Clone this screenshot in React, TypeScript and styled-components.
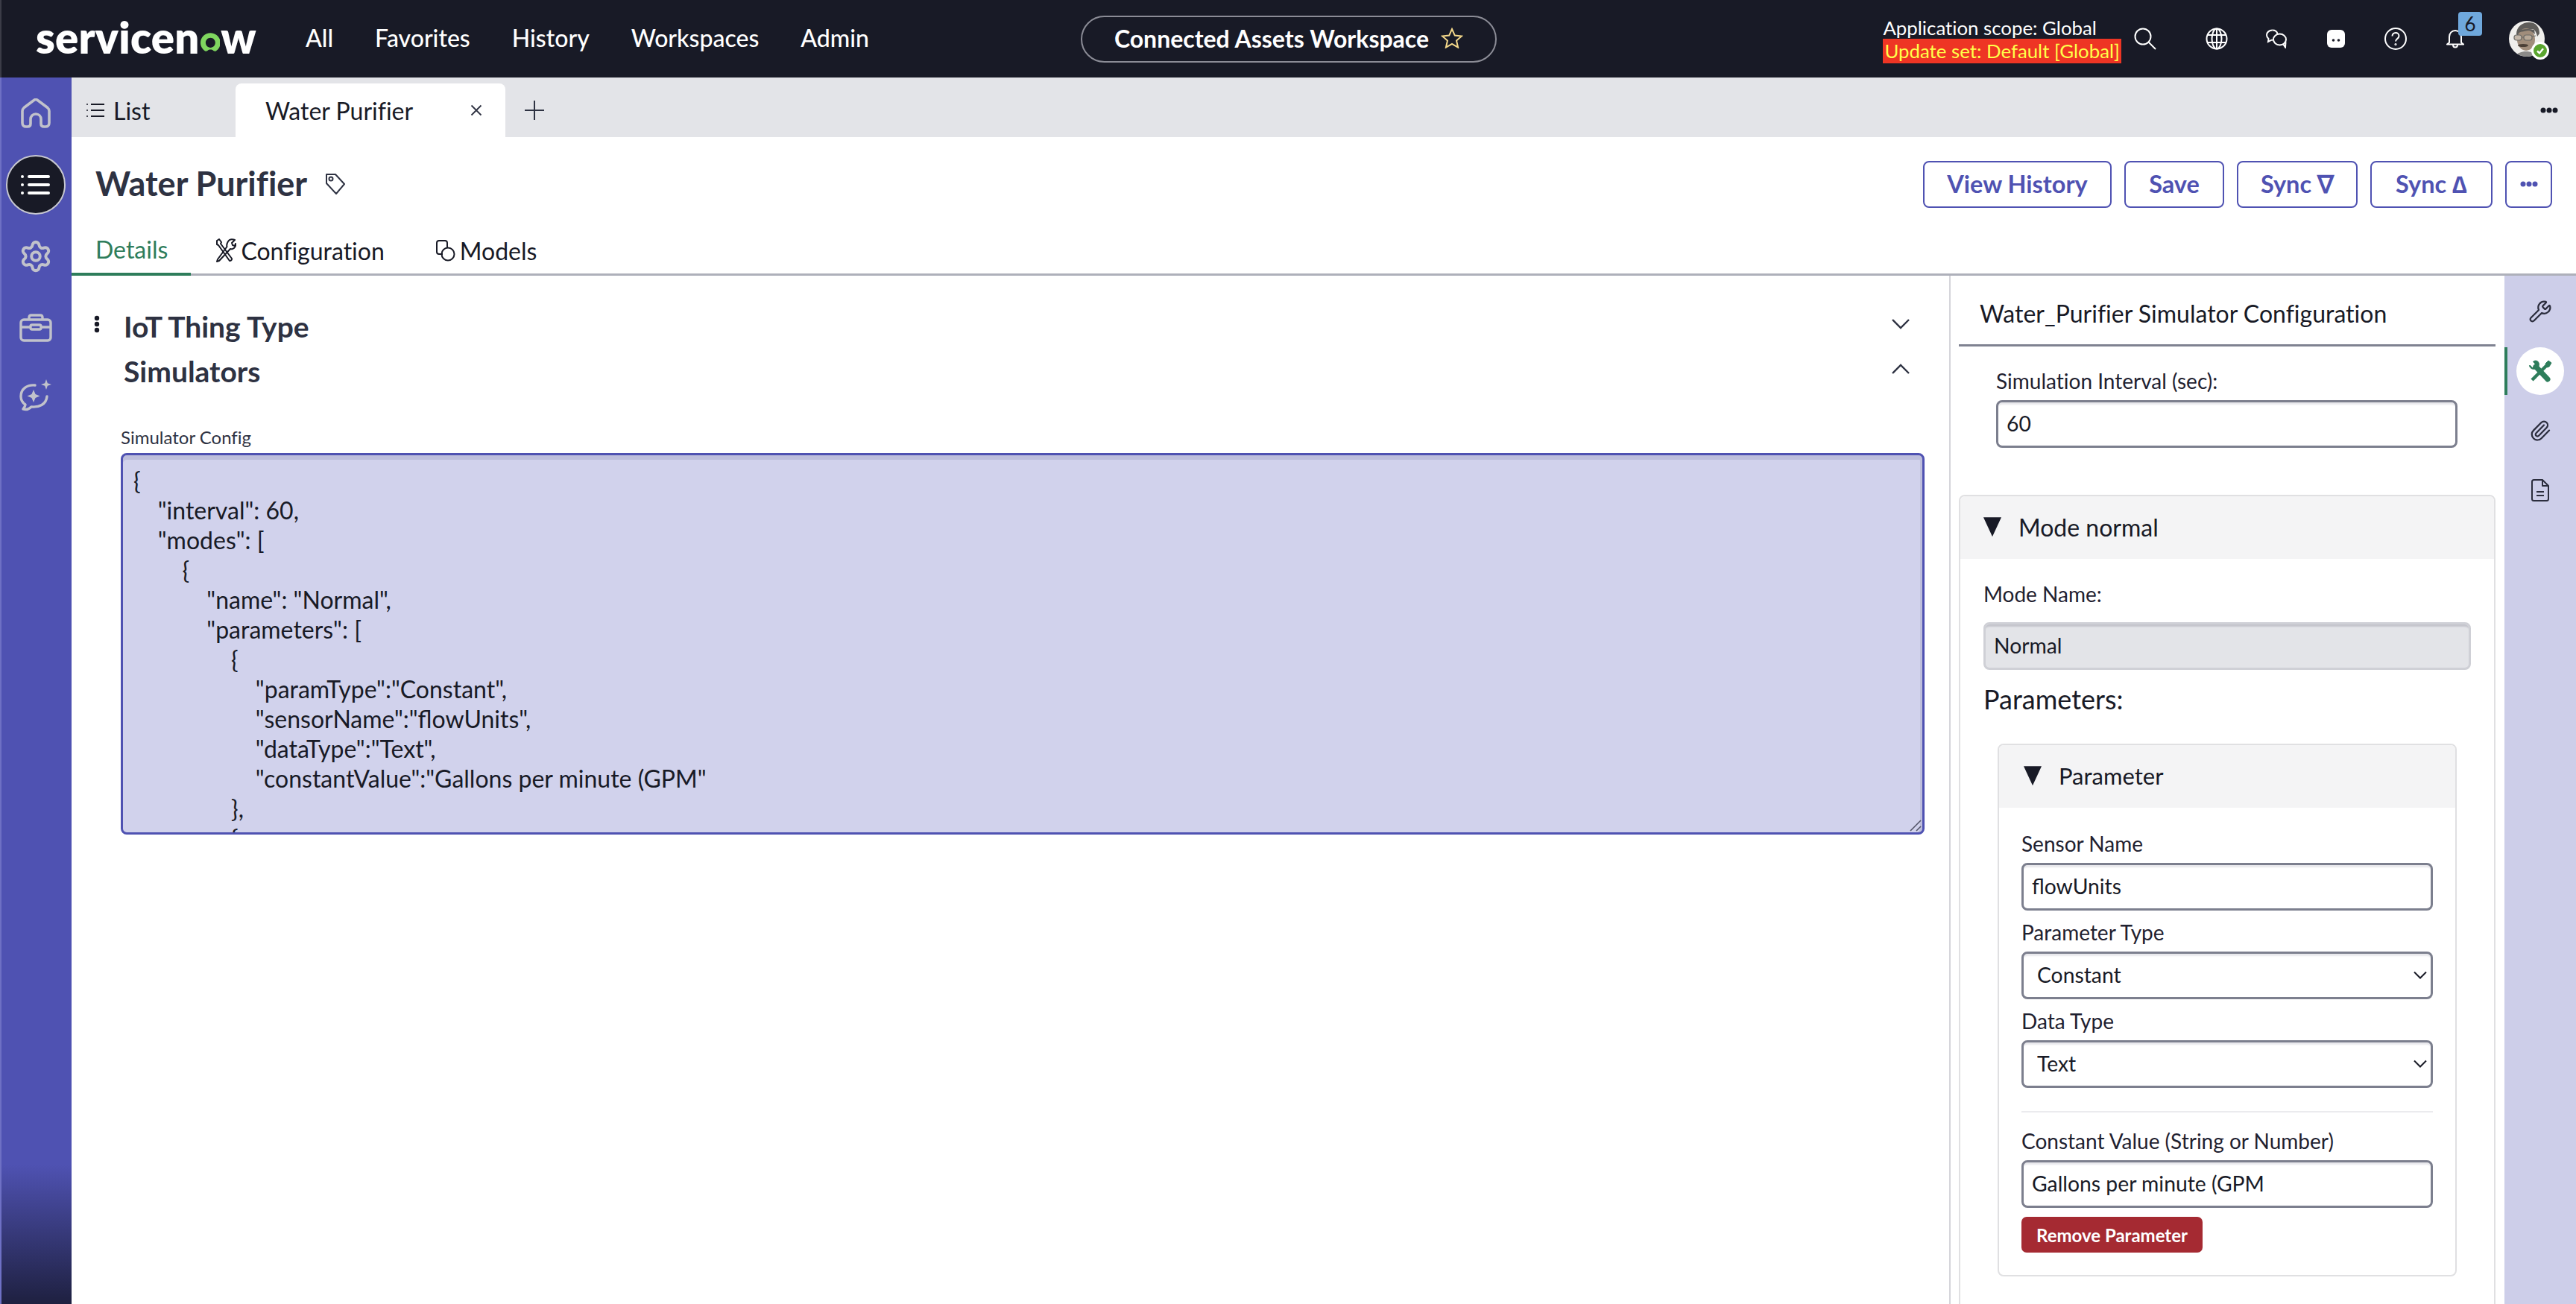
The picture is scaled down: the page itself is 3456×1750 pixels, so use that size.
import React from "react";
import styled, { createGlobalStyle } from "styled-components";
import { Paperclip, Settings, Wrench } from "lucide-react";

const GlobalStyle = createGlobalStyle`
  html, body {
    margin: 0;
    padding: 0;
    background: #fff;
    font-family: Lato, "Liberation Sans", sans-serif;
    font-variant-ligatures: none;
    color: #181a26;
  }
  * {
    box-sizing: border-box;
  }
`;

const Page = styled.div`
  width: 3456px;
  height: 1750px;
  overflow: hidden;
  display: flex;
  flex-direction: column;
`;

const TopBar = styled.header`
  height: 104px;
  flex: none;
  display: grid;
  grid-template-columns: 1fr auto 1fr;
  align-items: center;
  background: #181a26;
  border-left: 2px solid #3b3c47;
  color: #fff;
`;

const TopLeft = styled.div`
  display: flex;
  align-items: center;
  padding: 0 0 4px 46px;
`;

const Logo = styled.div`
  display: flex;
  align-items: baseline;
  width: 296px;
  font-size: 58px;
  line-height: 60px;
  font-weight: 800;
  letter-spacing: 0.2px;
  color: #fff;
  svg {
    margin: 0 1px 7px 1px;
    align-self: flex-end;
  }
`;

const Nav = styled.nav`
  display: flex;
  gap: 56px;
  margin-left: 66px;
  font-size: 32px;
  font-weight: 500;
  span {
    white-space: nowrap;
  }
`;

const WorkspacePill = styled.div`
  width: 558px;
  height: 63px;
  display: flex;
  align-items: center;
  justify-content: center;
  gap: 16px;
  padding-bottom: 2px;
  border: 2px solid #8b8c96;
  border-radius: 32px;
  font-size: 32px;
  font-weight: 700;
  white-space: nowrap;
`;

const TopRight = styled.div`
  display: flex;
  align-items: center;
  justify-content: flex-end;
  padding-right: 26px;
`;

const Scope = styled.div`
  display: flex;
  flex-direction: column;
  align-items: flex-start;
  font-size: 25.8px;
  line-height: 30px;
  padding-top: 2px;
  white-space: nowrap;
`;

const UpdateSet = styled.span`
  display: block;
  background: #ee3524;
  color: #ffff4a;
  line-height: 33px;
  padding: 0 2px;
`;

const IconSlot = styled.div<{ $w?: number; $ml?: number }>`
  position: relative;
  width: ${(p) => p.$w ?? 80}px;
  margin-left: ${(p) => p.$ml ?? 0}px;
  height: 64px;
  display: flex;
  align-items: center;
  justify-content: center;
`;

const Badge = styled.span`
  position: absolute;
  top: -4px;
  left: 44px;
  width: 32px;
  height: 32px;
  display: flex;
  align-items: center;
  justify-content: center;
  background: #6fa8dc;
  border-radius: 4px;
  color: #181a26;
  font-size: 26px;
`;

const Avatar = styled.div`
  position: relative;
  width: 48px;
  height: 48px;
`;

const Presence = styled.span`
  position: absolute;
  right: -6px;
  bottom: -4px;
  width: 24px;
  height: 24px;
  display: flex;
  align-items: center;
  justify-content: center;
  border-radius: 50%;
  background: #5aa52f;
  border: 3px solid #fff;
`;

const Body = styled.div`
  flex: 1;
  min-height: 0;
  display: flex;
`;

const SideNav = styled.aside`
  width: 96px;
  flex: none;
  display: flex;
  flex-direction: column;
  align-items: center;
  padding-top: 28px;
  background: linear-gradient(180deg, #4f52b2 0, #4f52b2 1459px, #1e2040 100%);
  border-left: 2px solid #6e70c4;
  color: #c1c2cb;
  padding-right: 2px;
`;

const SideItem = styled.div<{ $h: number }>`
  height: ${(p) => p.$h}px;
  flex: none;
  display: flex;
  align-items: center;
  justify-content: center;
`;

const ActiveCircle = styled.div`
  width: 80px;
  height: 80px;
  display: flex;
  align-items: center;
  justify-content: center;
  background: #181a26;
  border: 2px solid #c6c7d0;
  border-radius: 50%;
`;

const Main = styled.main`
  flex: 1;
  min-width: 0;
  display: flex;
  flex-direction: column;
`;

const TabBar = styled.div`
  height: 80px;
  flex: none;
  display: flex;
  align-items: flex-end;
  background: #e3e4e8;
  position: relative;
`;

const ListTab = styled.div`
  width: 220px;
  height: 72px;
  display: flex;
  align-items: center;
  gap: 12px;
  padding: 0 0 0 20px;
  font-size: 32px;
`;

const OpenTab = styled.div`
  width: 362px;
  height: 72px;
  display: flex;
  align-items: center;
  justify-content: space-between;
  padding: 0 30px 0 40px;
  background: #fff;
  border-radius: 8px 8px 0 0;
  font-size: 32px;
  white-space: nowrap;
`;

const AddTab = styled.div`
  width: 78px;
  height: 72px;
  display: flex;
  align-items: center;
  justify-content: center;
`;

const TabBarMore = styled.div`
  margin-left: auto;
  height: 72px;
  padding-right: 24px;
  display: flex;
  align-items: center;
`;

const RecordHeader = styled.div`
  flex: none;
  display: flex;
  align-items: center;
  justify-content: space-between;
  height: 63px;
  margin-top: 32px;
  padding: 0 32px;
`;

const TitleRow = styled.div`
  display: flex;
  align-items: center;
  gap: 24px;
  padding-bottom: 2px;
`;

const Title = styled.h1`
  margin: 0;
  font-size: 45px;
  line-height: 63px;
  font-weight: 700;
  color: #2e3242;
  white-space: nowrap;
`;

const Actions = styled.div`
  display: flex;
  gap: 17px;
`;

const ActionButton = styled.button<{ $w: number }>`
  width: ${(p) => p.$w}px;
  height: 63px;
  padding: 0 0 2px;
  display: flex;
  align-items: center;
  justify-content: center;
  background: #fff;
  border: 2px solid #4f52b2;
  border-radius: 8px;
  color: #4f52b2;
  font-family: inherit;
  font-size: 32.5px;
  font-weight: 700;
  white-space: pre;
`;

const SubTabs = styled.div`
  flex: none;
  display: flex;
  height: 64px;
  margin-top: 27px;
  border-bottom: 3px solid #aeb0ba;
`;

const SubTab = styled.div<{ $active?: boolean; $pl: number; $pr: number }>`
  height: 64px;
  display: flex;
  align-items: center;
  gap: 6px;
  padding: 0 ${(p) => p.$pr}px 4px ${(p) => p.$pl}px;
  font-size: 32px;
  color: ${(p) => (p.$active ? "#2e7d5b" : "#181a26")};
  border-bottom: ${(p) => (p.$active ? "4px solid #2e7d5b" : "none")};
`;

const Content = styled.div`
  flex: 1;
  min-height: 0;
  display: flex;
`;

const FormArea = styled.section`
  flex: 1;
  min-width: 0;
  padding: 38px 33px 0 30px;
`;

const SectionRow = styled.div<{ $indent: number }>`
  height: 60px;
  display: flex;
  align-items: center;
  padding-left: ${(p) => p.$indent}px;
  padding-right: 20px;
  gap: 32px;
  svg {
    margin-bottom: 6px;
  }
`;

const SectionTitle = styled.h2`
  flex: 1;
  margin: 0;
  font-size: 39px;
  font-weight: 700;
  color: #2e3242;
`;

const ConfigLabel = styled.label`
  display: block;
  margin: 46px 0 8px 36px;
  font-size: 24px;
  line-height: 26px;
  color: #2e3242;
`;

const ConfigWrap = styled.div`
  position: relative;
  width: 2420px;
  height: 512px;
  margin-left: 36px;
  svg {
    position: absolute;
    right: 4px;
    bottom: 4px;
    pointer-events: none;
  }
`;

const ConfigArea = styled.textarea`
  display: block;
  width: 100%;
  height: 100%;
  padding: 14px;
  font-family: inherit;
  font-size: 32px;
  line-height: 40px;
  white-space: pre;
  color: #181a26;
  background: #d1d2ec;
  border: 3px solid #4f52b2;
  border-radius: 8px;
  box-shadow: inset 0 6px 0 #bdbedc, inset -3px 0 0 #bdbedc;
  outline: none;
  overflow: hidden;
  resize: none;
`;

const SidePanel = styled.section`
  width: 745px;
  flex: none;
  padding: 0 12px 0 11px;
  border-left: 2px solid #d5d5da;
  overflow: hidden;
`;

const PanelTitle = styled.div`
  height: 95px;
  padding: 32px 0 0 28px;
  font-size: 32px;
  line-height: 38px;
  white-space: nowrap;
  border-bottom: 3px solid #7f8291;
`;

const IntervalBlock = styled.div`
  padding: 29px 0 0 50px;
`;

const FieldLabel = styled.label`
  display: block;
  font-size: 28px;
  line-height: 34px;
  white-space: nowrap;
  color: #1f2130;
`;

const TextInput = styled.input<{ $w: number; $disabled?: boolean }>`
  display: block;
  width: ${(p) => p.$w}px;
  height: 64px;
  margin-top: 9px;
  padding: 0 11px 3px;
  font-family: inherit;
  font-size: 28.3px;
  color: #181a26;
  background: ${(p) => (p.$disabled ? "#e3e4e8" : "#fff")};
  border: 3px solid ${(p) => (p.$disabled ? "#cfd0d6" : "#7c7f8e")};
  border-radius: 8px;
  box-shadow: inset 0 5px 2px -2px ${(p) => (p.$disabled ? "#c4c5cc" : "#e8e8ec")};
  outline: none;
`;

const Accordion = styled.div<{ $w: number; $mt: number; $ml?: number }>`
  width: ${(p) => p.$w}px;
  margin-top: ${(p) => p.$mt}px;
  margin-left: ${(p) => p.$ml ?? 0}px;
  background: #fff;
  border: 2px solid #e0e0e2;
  border-radius: 8px;
  overflow: hidden;
`;

const AccordionHead = styled.div<{ $fs: number; $pl: number }>`
  height: 84px;
  display: flex;
  align-items: center;
  gap: 23px;
  padding-left: ${(p) => p.$pl}px;
  padding-bottom: 2px;
  background: #f4f4f5;
  font-size: ${(p) => p.$fs}px;
  svg {
    flex: none;
  }
`;

const ModeBody = styled.div`
  padding: 30px 0 140px 31px;
`;

const ModeNameInput = styled(TextInput)`
  margin-top: 21px;
`;

const ParametersHeading = styled.div`
  margin-top: 16px;
  font-size: 36px;
  line-height: 46px;
`;

const ParamBody = styled.div`
  padding: 31px 0 30px 30px;
`;

const FieldLabelNext = styled(FieldLabel)`
  margin-top: 12px;
`;

const SelectBox = styled.div`
  position: relative;
  width: 552px;
  height: 64px;
  margin-top: 9px;
  svg {
    position: absolute;
    right: 8px;
    top: 26px;
    pointer-events: none;
  }
`;

const Select = styled.select`
  appearance: none;
  display: block;
  width: 100%;
  height: 100%;
  padding: 0 0 3px 18px;
  font-family: inherit;
  font-size: 28.3px;
  color: #181a26;
  background: #fff;
  border: 3px solid #7c7f8e;
  border-radius: 8px;
  box-shadow: inset 0 5px 2px -2px #e8e8ec;
  outline: none;
`;

const Divider = styled.hr`
  width: 552px;
  height: 2px;
  margin: 31px 0 21px;
  background: #ebebee;
  border: none;
`;

const RemoveButton = styled.button`
  display: block;
  width: 243px;
  height: 48px;
  margin-top: 12px;
  padding: 0;
  background: #a52a32;
  color: #fff;
  border: none;
  border-radius: 7px;
  font-family: inherit;
  font-size: 24px;
  font-weight: 700;
  white-space: nowrap;
`;

const Rail = styled.aside`
  width: 96px;
  flex: none;
  display: flex;
  flex-direction: column;
  align-items: center;
  padding-top: 16px;
  background: #cdcee9;
  color: #2b2d3d;
`;

const RailItem = styled.div<{ $active?: boolean }>`
  position: relative;
  width: 64px;
  height: 64px;
  margin-bottom: 16px;
  display: flex;
  align-items: center;
  justify-content: center;
  background: ${(p) => (p.$active ? "#fff" : "transparent")};
  border-radius: 50%;
  &::before {
    content: ${(p) => (p.$active ? '""' : "none")};
    position: absolute;
    left: -16px;
    top: 0;
    width: 4px;
    height: 64px;
    background: #2e7d5b;
  }
`;

const configText = `{
    "interval": 60,
    "modes": [
        {
            "name": "Normal",
            "parameters": [
                {
                    "paramType":"Constant",
                    "sensorName":"flowUnits",
                    "dataType":"Text",
                    "constantValue":"Gallons per minute (GPM"
                },
                {`;

// the green "o" of the wordmark, ring with a notch at the bottom
const LogoO = () => (
  <svg width="31" height="31" viewBox="0 0 31 31">
    <path
      fillRule="evenodd"
      fill="#7fd65f"
      d="M15.5 0C24 0 31 6.8 31 15.3c0 5.2-2.6 9.8-6.6 12.6-1.4 1-3.2.8-4.4-.3-1.2-1-2.7-1.6-4.5-1.6s-3.3.6-4.5 1.6c-1.2 1.1-3 1.3-4.4.3C2.6 25.1 0 20.5 0 15.3 0 6.8 7 0 15.5 0zm0 7.6c-4.2 0-7.5 3.4-7.5 7.7s3.3 7.6 7.5 7.6 7.5-3.3 7.5-7.6-3.3-7.7-7.5-7.7z"
    />
  </svg>
);

const StarIcon = () => (
  <svg width="30" height="28" viewBox="0 0 30 28" fill="none" stroke="#f5d98b" strokeWidth="2">
    <path d="M15 2l3.8 8.6 9.2.9-7 6.1 2.1 9-8.1-4.8-8.1 4.8 2.1-9-7-6.1 9.2-.9z" />
  </svg>
);

const SearchIcon = () => (
  <svg width="30" height="30" viewBox="0 0 30 30" fill="none" stroke="#fff" strokeWidth="2">
    <circle cx="12" cy="12" r="10.5" />
    <path d="M19.5 19.5L29 29" />
  </svg>
);

const GlobeIcon = () => (
  <svg width="30" height="30" viewBox="0 0 30 30" fill="none" stroke="#fff" strokeWidth="2">
    <circle cx="15" cy="15" r="13.5" />
    <ellipse cx="15" cy="15" rx="6.5" ry="13.5" />
    <path d="M15 1.5v27M2.5 10h25M2.5 20h25" />
  </svg>
);

const ChatIcon = () => (
  <svg width="30" height="26" viewBox="0 0 30 26" fill="none" stroke="#fff" strokeWidth="2">
    <path d="M9.5 1.5c-4 0-7.500 2.800-7.500 6.500 0 2 1 3.800 2.500 5l-.5 4 4.500-2.300c.5.100 1 .1 1.500.1" />
    <path d="M9.500 1.500c3.800 0 6.500 2.200 7 5" />
    <ellipse cx="19.500" cy="14" rx="8.500" ry="7.500" />
    <path d="M24 20l3 4.500.5-7" />
  </svg>
);

const BotIcon = () => (
  <svg width="24" height="24" viewBox="0 0 24 24">
    <rect width="24" height="24" rx="6" fill="#fff" />
    <circle cx="8.500" cy="14" r="1.800" fill="#181a26" />
    <circle cx="15.500" cy="14" r="1.800" fill="#181a26" />
  </svg>
);

const HelpIcon = () => (
  <svg width="30" height="30" viewBox="0 0 30 30" fill="none" stroke="#fff" strokeWidth="2">
    <circle cx="15" cy="15" r="14" />
    <path d="M10.500 11.500c0-2.700 2-4.500 4.500-4.500s4.500 1.800 4.500 4.300c0 3.700-4.500 3.700-4.500 7.200" />
    <circle cx="15" cy="22.500" r=".6" />
  </svg>
);

const BellIcon = () => (
  <svg width="26" height="26" viewBox="0 0 26 26" fill="none" stroke="#fff" strokeWidth="2">
    <path d="M5 18V10.500C5 5.500 8.500 2 13 2s8 3.500 8 8.500V18l3 2.500H2z" strokeLinejoin="round" />
    <path d="M10 21c0 2 1.300 3.500 3 3.500s3-1.500 3-3.500" />
  </svg>
);

const Portrait = () => (
  <svg width="48" height="48" viewBox="0 0 48 48">
    <clipPath id="face-clip">
      <circle cx="24" cy="24" r="24" />
    </clipPath>
    <g clipPath="url(#face-clip)">
      <rect width="48" height="48" fill="#f0efec" />
      <path d="M10 18c0-10 8-16 17-16s14 6 14 15l-3 4c-1-5-3-9-6-10-5 1-12 1-16 3-2 2-3 4-3 8z" fill="#5f5d5a" />
      <ellipse cx="23" cy="25" rx="12" ry="15" fill="#a08d7b" />
      <path d="M12 14c4-3 14-4 22-2l1 6c-3-3-6-5-9-5-4 1-9 1-13 3z" fill="#5f5d5a" />
      <rect x="7" y="19" width="10" height="7" rx="3" fill="#c4b7a9" stroke="#6b6b67" strokeWidth="1.200" />
      <rect x="20" y="19" width="11" height="7" rx="3" fill="#b7a897" stroke="#6b6b67" strokeWidth="1.200" />
      <path d="M17 22h3M31 21l5-1" stroke="#6b6b67" strokeWidth="1" />
      <ellipse cx="19" cy="33" rx="7" ry="2" fill="#4a3f36" />
      <path d="M8 48c3-5 9-7 15-7s12 2 15 7z" fill="#8b8a88" />
    </g>
  </svg>
);

const CheckMark = () => (
  <svg width="12" height="12" viewBox="0 0 12 12" fill="none" stroke="#fff" strokeWidth="2.400">
    <path d="M2 6.500l3 2.800 5-6" />
  </svg>
);

const HomeIcon = () => (
  <svg width="40" height="40" viewBox="0 0 40 40" fill="none" stroke="currentColor" strokeWidth="3.600" strokeLinejoin="round">
    <path d="M2 17c0-2 .8-3.300 2.200-4.500L17.500 2.500c1.500-1.200 3.500-1.200 5 0l13.300 10c1.400 1.200 2.200 2.500 2.200 4.500v16c0 3-2 5-5 5h-2c-2.500 0-4-1.500-4-4v-6c0-4-3-7-7-7s-7 3-7 7v6c0 2.500-1.500 4-4 4H7c-3 0-5-2-5-5z" />
  </svg>
);

const ListCircleIcon = () => (
  <svg width="40" height="28" viewBox="0 0 40 28" fill="#fff">
    <circle cx="2" cy="3" r="2" />
    <circle cx="2" cy="14" r="2" />
    <circle cx="2" cy="25" r="2" />
    <rect x="9" y="1" width="30" height="4" rx="2" />
    <rect x="9" y="12" width="30" height="4" rx="2" />
    <rect x="9" y="23" width="30" height="4" rx="2" />
  </svg>
);

const BriefcaseIcon = () => (
  <svg width="44" height="38" viewBox="0 0 44 38" fill="none" stroke="currentColor" strokeWidth="3.400" strokeLinejoin="round">
    <rect x="2" y="8" width="40" height="28" rx="4" />
    <path d="M13 8V5c0-2 1-3 3-3h12c2 0 3 1 3 3v3M2 18h12M30 18h12" />
    <rect x="15" y="15" width="14" height="6" rx="2" />
  </svg>
);

const SparkChatIcon = () => (
  <svg width="46" height="46" viewBox="0 0 46 46" fill="none" stroke="currentColor" strokeWidth="3.400" strokeLinejoin="round">
    <path d="M22 8C11 7 3 13 3 23c0 5 3 9 6 11-.3 2.500-2 5-3 6 4 1.500 8 0 11-3 10 1 20-3 21-14" strokeLinecap="round" />
    <path d="M20 14l2.500 6 6 2.500-6 2.500-2.500 6-2.500-6-6-2.500 6-2.500z" fill="currentColor" stroke="none" />
    <path d="M37 0l1.800 5.200L44 7l-5.200 1.800L37 14l-1.800-5.200L30 7l5.200-1.800z" fill="currentColor" stroke="none" />
  </svg>
);

const ListLinesIcon = () => (
  <svg width="24" height="20" viewBox="0 0 24 20" fill="none" stroke="#181a26" strokeWidth="2">
    <path d="M6 2h18M6 10h18M6 18h18" />
    <path d="M0 2h2M0 10h2M0 18h2" strokeWidth="1.600" />
  </svg>
);

const CloseIcon = () => (
  <svg width="18" height="18" viewBox="0 0 18 18" fill="none" stroke="#2e3242" strokeWidth="1.800">
    <path d="M2.500 2.500l13 13M15.500 2.500l-13 13" />
  </svg>
);

const PlusIcon = () => (
  <svg width="26" height="26" viewBox="0 0 26 26" fill="none" stroke="#2e3242" strokeWidth="2">
    <path d="M13 0v26M0 13h26" />
  </svg>
);

const DotsIcon = () => (
  <svg width="24" height="8" viewBox="0 0 24 8" fill="currentColor">
    <circle cx="4" cy="4" r="3.500" />
    <circle cx="12" cy="4" r="3.500" />
    <circle cx="20" cy="4" r="3.500" />
  </svg>
);

const TagIcon = () => (
  <svg width="28" height="30" viewBox="0 0 28 30" fill="none" stroke="#2e3242" strokeWidth="2" strokeLinejoin="round">
    <path d="M2 2h12l12 13-11 13L2 14z" />
    <circle cx="8" cy="8" r="2.500" />
  </svg>
);

const ToolsOutlineIcon = () => (
  <svg width="28" height="32" viewBox="0 0 28 32" fill="none" stroke="#181a26" strokeWidth="2" strokeLinejoin="round">
    <path d="M2 3l3-2 3 4-1 2 15 20c.5 1.500-1.500 3.500-3 3L4 9 2 8z" />
    <path d="M17 4c2-3 6-3.500 9-2l-4 4 1 3 3 1 1-3c.5 3-1 6-4 7-1 .3-2 .3-3 0L5 30l-3 1 1-3L15.500 11c-.3-1-.3-4 1.500-7z" />
  </svg>
);

const ModelsIcon = () => (
  <svg width="26" height="30" viewBox="0 0 26 30" fill="none" stroke="#181a26" strokeWidth="2">
    <path d="M9 20H4c-2 0-3-1-3-3V5c0-2 1-3 3-3h8c2 0 3 1 3 3v6" />
    <circle cx="16" cy="20" r="8.500" />
  </svg>
);

const KebabIcon = () => (
  <svg width="8" height="24" viewBox="0 0 8 24" fill="#181a26">
    <circle cx="4" cy="4" r="3.200" />
    <circle cx="4" cy="12" r="3.200" />
    <circle cx="4" cy="20" r="3.200" />
  </svg>
);

const ChevronIcon = ({ up }: { up?: boolean }) => (
  <svg width="24" height="14" viewBox="0 0 24 14" fill="none" stroke="#2e3242" strokeWidth="2.400">
    <path d={up ? "M1 13L12 2l11 11" : "M1 1l11 11L23 1"} />
  </svg>
);

const ResizeGrip = () => (
  <svg width="16" height="16" viewBox="0 0 16 16" fill="none" stroke="#55576a" strokeWidth="1.600">
    <path d="M1 15L15 1M9 15l6-6" />
  </svg>
);

const ActiveToolsIcon = () => (
  <svg width="32" height="30" viewBox="0 0 32 30" fill="none" stroke="#2e7d5b">
    <path d="M10 9l16 17" strokeWidth="7" strokeLinecap="round" />
    <path d="M2 7l3.500 3.500L10 6 6.500 2.500C9 0 13 1 14 4s0 6-3 7.500-7 1-8.500-1.500S1.500 8 2 7z" fill="#2e7d5b" strokeWidth="1" />
    <path d="M25 7L5 27" strokeWidth="4.500" />
    <path d="M23 5l4-4 4 3-3 5-3 1z" fill="#2e7d5b" strokeWidth="1" />
  </svg>
);

const DocIcon = () => (
  <svg width="26" height="30" viewBox="0 0 26 30" fill="none" stroke="#2b2d3d" strokeWidth="2" strokeLinejoin="round">
    <path d="M2 3.500C2 2 3 1 4.500 1H16l8 8v17.500c0 1.500-1 2.500-2.500 2.500h-17C3 29 2 28 2 26.500z" />
    <path d="M16 1v8h8M8 17h10M8 22h10" />
  </svg>
);

const Caret = ({ size }: { size: number }) => (
  <svg width={size} height={size * 1.1} viewBox="0 0 24 26" fill="#181a26">
    <path d="M0 0h24L12 26z" />
  </svg>
);

const SelectChevron = () => (
  <svg width="18" height="12" viewBox="0 0 18 12" fill="none" stroke="#181a26" strokeWidth="2">
    <path d="M1 1.500l8 8 8-8" />
  </svg>
);

const App = () => (
  <Page>
    <GlobalStyle />
    <TopBar>
      <TopLeft>
        <Logo>
          servicen
          <LogoO />w
        </Logo>
        <Nav>
          <span>All</span>
          <span>Favorites</span>
          <span>History</span>
          <span>Workspaces</span>
          <span>Admin</span>
        </Nav>
      </TopLeft>
      <WorkspacePill>
        Connected Assets Workspace
        <StarIcon />
      </WorkspacePill>
      <TopRight>
        <Scope>
          <span>Application scope: Global</span>
          <UpdateSet>Update set: Default [Global]</UpdateSet>
        </Scope>
        <IconSlot $w={64}>
          <SearchIcon />
        </IconSlot>
        <IconSlot $ml={24}>
          <GlobeIcon />
        </IconSlot>
        <IconSlot>
          <ChatIcon />
        </IconSlot>
        <IconSlot>
          <BotIcon />
        </IconSlot>
        <IconSlot>
          <HelpIcon />
        </IconSlot>
        <IconSlot>
          <BellIcon />
          <Badge>6</Badge>
        </IconSlot>
        <IconSlot $ml={16}>
          <Avatar>
            <Portrait />
            <Presence>
              <CheckMark />
            </Presence>
          </Avatar>
        </IconSlot>
      </TopRight>
    </TopBar>
    <Body>
      <SideNav>
        <SideItem $h={40}>
          <HomeIcon />
        </SideItem>
        <SideItem $h={152}>
          <ActiveCircle>
            <ListCircleIcon />
          </ActiveCircle>
        </SideItem>
        <SideItem $h={40}>
          <Settings size={46} strokeWidth={2.1} />
        </SideItem>
        <SideItem $h={152}>
          <BriefcaseIcon />
        </SideItem>
        <SideItem $h={32}>
          <SparkChatIcon />
        </SideItem>
      </SideNav>
      <Main>
        <TabBar>
          <ListTab>
            <ListLinesIcon />
            List
          </ListTab>
          <OpenTab>
            Water Purifier
            <CloseIcon />
          </OpenTab>
          <AddTab>
            <PlusIcon />
          </AddTab>
          <TabBarMore>
            <DotsIcon />
          </TabBarMore>
        </TabBar>
        <RecordHeader>
          <TitleRow>
            <Title>Water Purifier</Title>
            <TagIcon />
          </TitleRow>
          <Actions>
            <ActionButton $w={253}>View History</ActionButton>
            <ActionButton $w={134}>Save</ActionButton>
            <ActionButton $w={162}>Sync ∇</ActionButton>
            <ActionButton $w={164}>Sync ∆</ActionButton>
            <ActionButton $w={63}>
              <DotsIcon />
            </ActionButton>
          </Actions>
        </RecordHeader>
        <SubTabs>
          <SubTab $active $pl={32} $pr={31}>
            Details
          </SubTab>
          <SubTab $pl={33} $pr={33}>
            <ToolsOutlineIcon />
            Configuration
          </SubTab>
          <SubTab $pl={36} $pr={32}>
            <ModelsIcon />
            Models
          </SubTab>
        </SubTabs>
        <Content>
          <FormArea>
            <SectionRow $indent={0}>
              <KebabIcon />
              <SectionTitle>IoT Thing Type</SectionTitle>
              <ChevronIcon />
            </SectionRow>
            <SectionRow $indent={40}>
              <SectionTitle>Simulators</SectionTitle>
              <ChevronIcon up />
            </SectionRow>
            <ConfigLabel>Simulator Config</ConfigLabel>
            <ConfigWrap>
              <ConfigArea readOnly defaultValue={configText} />
              <ResizeGrip />
            </ConfigWrap>
          </FormArea>
          <SidePanel>
            <PanelTitle>Water_Purifier Simulator Configuration</PanelTitle>
            <IntervalBlock>
              <FieldLabel>Simulation Interval (sec):</FieldLabel>
              <TextInput $w={619} readOnly defaultValue="60" />
            </IntervalBlock>
            <Accordion $w={720} $mt={63}>
              <AccordionHead $fs={32} $pl={31}>
                <Caret size={24} />
                Mode normal
              </AccordionHead>
              <ModeBody>
                <FieldLabel>Mode Name:</FieldLabel>
                <ModeNameInput $w={654} $disabled readOnly defaultValue="Normal" />
                <ParametersHeading>Parameters:</ParametersHeading>
                <Accordion $w={616} $mt={37} $ml={19}>
                  <AccordionHead $fs={31} $pl={33}>
                    <Caret size={24} />
                    Parameter
                  </AccordionHead>
                  <ParamBody>
                    <FieldLabel>Sensor Name</FieldLabel>
                    <TextInput $w={552} readOnly defaultValue="flowUnits" />
                    <FieldLabelNext>Parameter Type</FieldLabelNext>
                    <SelectBox>
                      <Select defaultValue="Constant">
                        <option>Constant</option>
                      </Select>
                      <SelectChevron />
                    </SelectBox>
                    <FieldLabelNext>Data Type</FieldLabelNext>
                    <SelectBox>
                      <Select defaultValue="Text">
                        <option>Text</option>
                      </Select>
                      <SelectChevron />
                    </SelectBox>
                    <Divider />
                    <FieldLabel>Constant Value (String or Number)</FieldLabel>
                    <TextInput $w={552} readOnly defaultValue="Gallons per minute (GPM" />
                    <RemoveButton>Remove Parameter</RemoveButton>
                  </ParamBody>
                </Accordion>
              </ModeBody>
            </Accordion>
          </SidePanel>
          <Rail>
            <RailItem>
              <Wrench size={32} strokeWidth={1.7} />
            </RailItem>
            <RailItem $active>
              <ActiveToolsIcon />
            </RailItem>
            <RailItem>
              <Paperclip size={30} strokeWidth={1.8} />
            </RailItem>
            <RailItem>
              <DocIcon />
            </RailItem>
          </Rail>
        </Content>
      </Main>
    </Body>
  </Page>
);

export default App;
